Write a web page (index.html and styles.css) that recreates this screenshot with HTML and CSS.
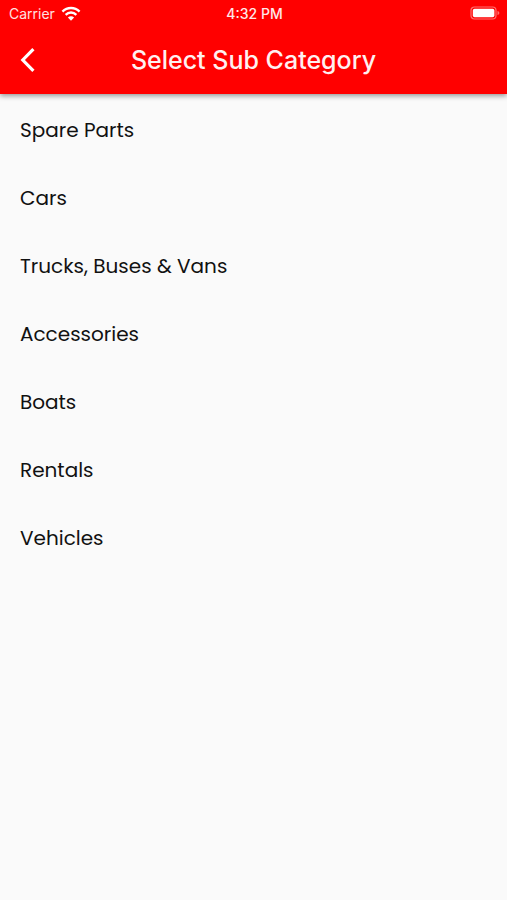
FILE: index.html
```html
<!DOCTYPE html>
<html lang="en">
<head>
    <meta charset="UTF-8">
    <meta name="viewport" content="width=device-width, initial-scale=1.0">
    <title>Select Sub Category</title>
    <link rel="stylesheet" href="styles.css">
</head>
<body>
    <header class="header">
        <div class="status-bar">
            <div class="carrier">
                <span>Carrier</span>
                <svg class="wifi" width="20" height="15" viewBox="0 0 18 14" aria-hidden="true">
                    <path d="M1 5.2C5.5 .7 12.5 .7 17 5.2M4 8.2c2.9-2.8 7.1-2.8 10 0" fill="none" stroke="#fff" stroke-width="2.2"/>
                    <path d="M9 13.8l-2.9-3c1.7-1.5 4.1-1.5 5.8 0z" fill="#fff"/>
                </svg>
            </div>
            <div class="time">4:32 PM</div>
            <svg class="battery" width="30" height="14" viewBox="0 0 30 14" aria-hidden="true">
                <rect x="1" y="1" width="25" height="12" rx="3.5" fill="none" stroke="#ff7070" stroke-width="1.2"/>
                <rect x="2.8" y="2.8" width="21.6" height="8.4" rx="1.8" fill="#fff"/>
                <path d="M27.5 5v4c1.1-.4 1.8-1.1 1.8-2s-.7-1.6-1.8-2z" fill="#ff7070"/>
            </svg>
        </div>
        <div class="nav-bar">
            <button type="button" class="back" aria-label="Back">
                <svg width="16" height="26" viewBox="0 0 16 26" aria-hidden="true">
                    <path d="M13.4 2.2L2.8 13l10.6 10.8" fill="none" stroke="#fff" stroke-width="3.2"/>
                </svg>
            </button>
            <h1 class="title">Select Sub Category</h1>
        </div>
    </header>

    <main>
        <ul class="category-list">
            <li><a href="#spare-parts">Spare Parts</a></li>
            <li><a href="#cars">Cars</a></li>
            <li><a href="#trucks">Trucks, Buses &amp; Vans</a></li>
            <li><a href="#accessories">Accessories</a></li>
            <li><a href="#boats">Boats</a></li>
            <li><a href="#rentals">Rentals</a></li>
            <li><a href="#vehicles">Vehicles</a></li>
        </ul>
    </main>
</body>
</html>
```
FILE: styles.css
```css
body {
    margin: 0;
    font-family: Poppins, Inter, sans-serif;
    background-color: #fafafa;
    color: #111;
}
.header {
    background-color: #ff0000;
    color: #fff;
    font-family: Inter, sans-serif;
    box-shadow: 0 2px 5px rgba(0, 0, 0, 0.4);
}
.status-bar {
    display: grid;
    grid-template-columns: 1fr auto 1fr;
    align-items: center;
    height: 26px;
    padding: 0 7px 0 9px;
    font-size: 14px;
}
.carrier {
    display: flex;
    align-items: center;
    gap: 6px;
    color: #ffe0e0;
}
.time {
    font-weight: 500;
    color: #ffe8e8;
}
.battery {
    justify-self: end;
}
.nav-bar {
    display: grid;
    grid-template-columns: 48px 1fr 48px;
    align-items: center;
    height: 68px;
}
.back {
    display: flex;
    align-items: center;
    height: 48px;
    padding: 0 0 0 20px;
    border: none;
    background: none;
    cursor: pointer;
}
.title {
    margin: 0;
    font-size: 25px;
    font-weight: 500;
    text-align: center;
    color: #fff0f0;
}
.category-list {
    list-style: none;
    margin: 0;
    padding: 2px 0 0;
}
.category-list a {
    display: flex;
    align-items: center;
    height: 68px;
    padding: 0 20px;
    font-size: 20px;
    color: inherit;
    text-decoration: none;
}
```
